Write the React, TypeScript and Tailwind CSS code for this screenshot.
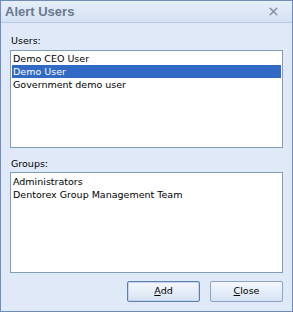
import { X } from 'lucide-react'

const users = ['Demo CEO User', 'Demo User', 'Government demo user']
const groups = ['Administrators', 'Dentorex Group Management Team']

export default function App() {
  return (
    <div className="w-[293px] h-[312px] flex flex-col border border-[#6f8db8] bg-[#dfe9f7] font-['DejaVu_Sans',sans-serif] text-[9.5px] text-black">
      <div className="h-[22px] flex items-center justify-between pl-[4px] pr-[12px] border-b border-[#b7c9e3] bg-gradient-to-b from-[#e6eef9] to-[#d5e2f3]">
        <span className="font-bold font-['Liberation_Sans',sans-serif] text-[13px] text-[#6a7890]">Alert Users</span>
        <X size={13} strokeWidth={3} className="text-[#8794aa]" />
      </div>
      <div className="flex-1 flex flex-col px-[9px] pt-[11px] pb-[8px]">
        <div className="leading-[13px] mb-[3px] pl-[1px]">Users:</div>
        <ListBox className="h-[98px] pt-[1px]">
          {users.map(u => (
            <div
              key={u}
              className={`h-[13px] leading-[13px] pl-[1px] ${u === 'Demo User' ? 'bg-[#316ac5] text-white' : ''}`}
            >
              {u}
            </div>
          ))}
        </ListBox>
        <div className="leading-[13px] mt-[9px] mb-[2px] pl-[1px]">Groups:</div>
        <ListBox className="h-[101px] pt-[2px]">
          {groups.map(g => (
            <div key={g} className="h-[13px] leading-[13px] pl-[1px]">{g}</div>
          ))}
        </ListBox>
        <div className="flex justify-end gap-[10px] mt-[8px]">
          <Button label="Add" accel="A" primary />
          <Button label="Close" accel="C" />
        </div>
      </div>
    </div>
  )
}

function ListBox({ className, children }: { className: string, children: React.ReactNode }) {
  return (
    <div className={`bg-white border border-[#7f9db9] px-[1px] ${className}`}>
      {children}
    </div>
  )
}

function Button({ label, accel, primary }: { label: string, accel: string, primary?: boolean }) {
  return (
    <div
      className={`w-[73px] h-[21px] flex items-center justify-center rounded-[2px] border bg-gradient-to-b from-[#f4f8fd] to-[#d6e3f3] ${primary ? 'border-[#5f80b0] shadow-[inset_0_0_0_1px_#c3d5ee]' : 'border-[#8ba3c6]'}`}
    >
      <span>
        <span className="underline">{accel}</span>
        {label.slice(1)}
      </span>
    </div>
  )
}
